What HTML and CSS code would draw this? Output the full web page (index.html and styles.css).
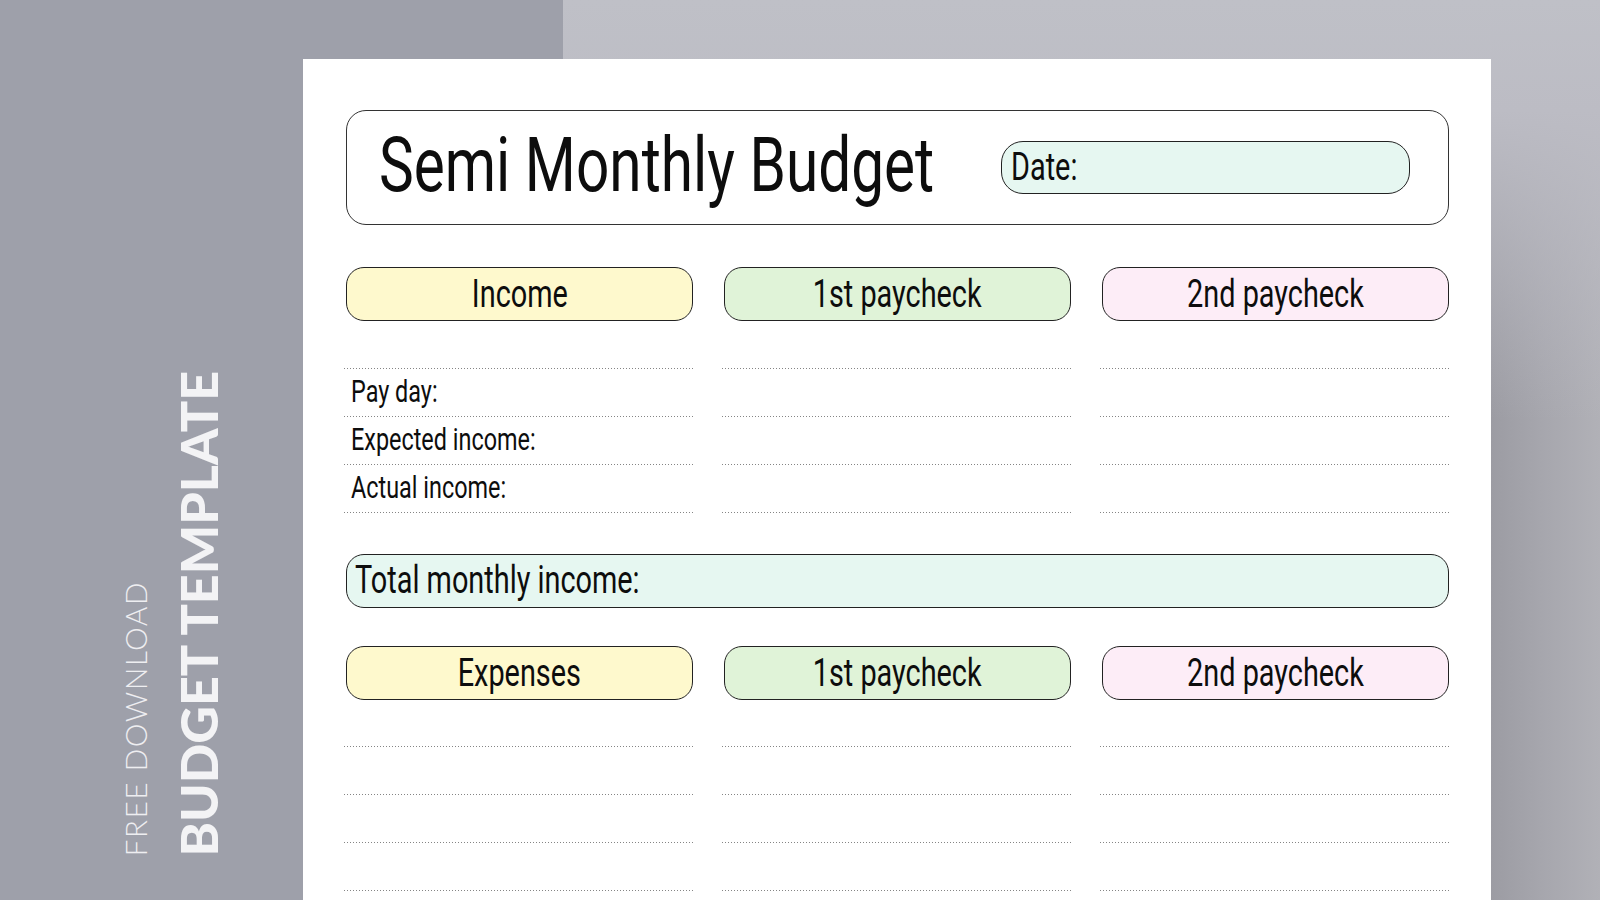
FILE: index.html
```html
<!DOCTYPE html>
<html lang="en">
<head>
<meta charset="utf-8">
<title>Semi Monthly Budget</title>
<link rel="stylesheet" href="styles.css">
</head>
<body>
<div class="stage">
  <aside class="side">
    <span class="side-small">FREE DOWNLOAD</span>
    <span class="side-big">BUDGET TEMPLATE</span>
  </aside>
  <main class="paper">
    <header class="title-box">
      <h1 class="title"><span class="t">Semi Monthly Budget</span></h1>
      <div class="date-pill"><span class="t">Date:</span></div>
    </header>

    <section class="cols heads">
      <div class="pill yellow"><span class="t">Income</span></div>
      <div class="pill green"><span class="t">1st paycheck</span></div>
      <div class="pill pink"><span class="t">2nd paycheck</span></div>
    </section>

    <section class="cols lines-grid first">
      <div class="lines">
        <div class="line"><span class="t">Pay day:</span></div>
        <div class="line"><span class="t">Expected income:</span></div>
        <div class="line"><span class="t">Actual income:</span></div>
      </div>
      <div class="lines">
        <div class="line"></div>
        <div class="line"></div>
        <div class="line"></div>
      </div>
      <div class="lines">
        <div class="line"></div>
        <div class="line"></div>
        <div class="line"></div>
      </div>
    </section>

    <div class="total-bar"><span class="t">Total monthly income:</span></div>

    <section class="cols heads second">
      <div class="pill yellow"><span class="t">Expenses</span></div>
      <div class="pill green"><span class="t">1st paycheck</span></div>
      <div class="pill pink"><span class="t">2nd paycheck</span></div>
    </section>

    <section class="cols lines-grid second-lines">
      <div class="lines">
        <div class="line"></div>
        <div class="line"></div>
        <div class="line"></div>
        <div class="line"></div>
      </div>
      <div class="lines">
        <div class="line"></div>
        <div class="line"></div>
        <div class="line"></div>
        <div class="line"></div>
      </div>
      <div class="lines">
        <div class="line"></div>
        <div class="line"></div>
        <div class="line"></div>
        <div class="line"></div>
      </div>
    </section>
  </main>
  <div class="right"></div>
</div>
</body>
</html>
```

FILE: styles.css
```css
* { box-sizing: border-box; }

html, body {
  margin: 0;
  padding: 0;
  width: 1600px;
  height: 900px;
  overflow: hidden;
}

body {
  background:
    linear-gradient(to right, #9ea0aa 0, #9ea0aa 563px, transparent 563px),
    linear-gradient(to bottom, #bfc0c7 0, #bcbcc4 130px, #a6a6ad 420px, #a3a3aa 900px);
  font-family: "Roboto", "Noto Sans", sans-serif;
  color: #0d0d0d;
}

.stage {
  display: flex;
  height: 900px;
}

/* condensed text: horizontally squeezed glyphs */
.t {
  display: inline-block;
  white-space: nowrap;
  transform: scaleX(0.74);
  transform-origin: left center;
}

/* ---------- left vertical titles ---------- */
.side {
  width: 303px;
  flex: none;
  display: flex;
  align-items: flex-end;
  padding: 0 0 44px 120px;
  gap: 22px;
  font-family: "Lato", "Open Sans", sans-serif;
}

.side-small,
.side-big {
  writing-mode: vertical-rl;
  transform: rotate(180deg);
  line-height: 1;
  white-space: nowrap;
}

.side-small {
  font-size: 30px;
  font-weight: 300;
  letter-spacing: 1.4px;
  color: #eeeef1;
}

.side-big {
  font-size: 52px;
  font-weight: 900;
  color: #f3f3f5;
}

/* ---------- paper ---------- */
.paper {
  width: 1188px;
  flex: none;
  margin-top: 59px;
  height: 900px;
  background: #fff;
  padding: 51px 42px 0 43px;
  box-shadow: 1px 0 0 #cfcfd4;
}

.right {
  flex: 1;
  background:
    linear-gradient(to bottom, #bfc0c7 0, #bcbcc4 110px, rgba(188,188,196,0) 420px),
    linear-gradient(to right, #9c9ca3 0, #a6a6ad 50px, #b1b1b7 109px);
}

.title-box {
  height: 115px;
  border: 1.5px solid #333;
  border-radius: 20px;
  display: flex;
  align-items: center;
  padding: 0 38px 0 32px;
}

.title {
  flex: 1;
  min-width: 0;
  margin: 0 0 5px 0;
  font-size: 76px;
  font-weight: 400;
  line-height: 1;
}

.title .t { transform: scaleX(0.77); }

.date-pill {
  flex: none;
  width: 409px;
  height: 53px;
  border: 1.5px solid #222;
  border-radius: 22px;
  background: #e6f7f1;
  font-size: 38px;
  line-height: 50px;
  padding-left: 9px;
}

.date-pill .t { transform: scaleX(0.76); }

.cols {
  display: grid;
  grid-template-columns: repeat(3, 1fr);
  column-gap: 31px;
}

.heads { margin-top: 42px; }
.heads.second { margin-top: 38px; }

.pill {
  height: 54px;
  border: 1.5px solid #222;
  border-radius: 18px;
  display: flex;
  align-items: center;
  justify-content: center;
  font-size: 39px;
  line-height: 1;
}

.pill .t { transform-origin: center center; }

.yellow { background: #fef9cd; }
.green  { background: #e0f3d8; }
.pink   { background: #fdedf7; }

.lines-grid.first { margin-top: 47px; }
.lines-grid.second-lines { margin-top: 46px; }

.lines {
  margin: 0 -1px 0 -2px;
  padding-bottom: 1px;
  background: linear-gradient(to right, #858585 1px, transparent 1px) 0 100% / 3px 1px repeat-x;
}

.line {
  height: 48px;
  line-height: 48px;
  font-size: 31px;
  padding-left: 7px;
  background: linear-gradient(to right, #858585 1px, transparent 1px) 0 0 / 3px 1px repeat-x;
}

.line .t { transform: scaleX(0.755); }

.second-lines .lines {
  background: none;
}

.total-bar {
  margin-top: 41px;
  height: 54px;
  border: 1.5px solid #222;
  border-radius: 18px;
  background: #e6f7f1;
  font-size: 39px;
  line-height: 51px;
  padding-left: 8px;
}
```
